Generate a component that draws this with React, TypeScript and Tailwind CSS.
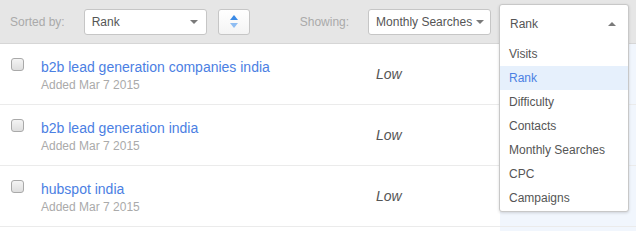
import React from 'react';

const keywords = [
  { title: 'b2b lead generation companies india', added: 'Added Mar 7 2015', difficulty: 'Low' },
  { title: 'b2b lead generation india', added: 'Added Mar 7 2015', difficulty: 'Low' },
  { title: 'hubspot india', added: 'Added Mar 7 2015', difficulty: 'Low' },
];

const sortOptions = ['Visits', 'Rank', 'Difficulty', 'Contacts', 'Monthly Searches', 'CPC', 'Campaigns'];

function CaretDown() {
  return (
    <svg width="8" height="4" viewBox="0 0 8 4" className="block">
      <path d="M0 0 L8 0 L4 4 Z" fill="#7a7a7a" />
    </svg>
  );
}

function CaretUp() {
  return (
    <svg width="8" height="4" viewBox="0 0 8 4" className="block">
      <path d="M0 4 L8 4 L4 0 Z" fill="#7a7a7a" />
    </svg>
  );
}

export default function App() {
  return (
    <div
      className="relative h-[231px] w-[636px] overflow-hidden bg-white"
      style={{ fontFamily: '"Liberation Sans", Arial, sans-serif' }}
    >
      {/* Toolbar */}
      <div className="flex h-[44px] items-center border-b border-[#d6d6d6] bg-[#e6e6e6]">
        <span className="ml-[10px] text-[12px] text-[#aaaaaa]">Sorted by:</span>
        <div className="ml-[19px] flex h-[26px] w-[123px] items-center justify-between rounded-[3px] border border-[#c6c6c6] bg-white pl-[7px] pr-[8px] text-[12px] text-[#555]">
          <span>Rank</span>
          <CaretDown />
        </div>
        <button className="ml-[11px] flex h-[26px] w-[32px] flex-col items-center justify-center gap-[3px] rounded-[3px] border border-[#c6c6c6] bg-gradient-to-b from-white to-[#f4f4f4]">
          <svg width="8" height="5" viewBox="0 0 8 5" className="block">
            <path d="M0 5 L8 5 L4 0 Z" fill="#3a8ae6" />
          </svg>
          <svg width="8" height="5" viewBox="0 0 8 5" className="block">
            <path d="M0 0 L8 0 L4 5 Z" fill="#8fbdf2" />
          </svg>
        </button>
        <span className="ml-[50px] text-[12px] text-[#aaaaaa]">Showing:</span>
        <div className="ml-[19px] flex h-[26px] items-center gap-[4px] rounded-[3px] border border-[#c6c6c6] bg-white pl-[7px] pr-[6px] text-[12px] text-[#555]">
          <span>Monthly Searches</span>
          <CaretDown />
        </div>
      </div>

      {/* Keyword rows */}
      {keywords.map((k) => (
        <div key={k.title} className="flex h-[61px] border-b border-[#ebebeb]">
          <div className="flex w-[500px]">
            <div className="ml-[11px] mt-[14px] h-[13px] w-[13px] rounded-[3px] border border-[#a9a9a9] bg-gradient-to-b from-[#f4f4f4] to-[#dedede]" />
            <div className="ml-[17px] flex-1 pt-[15px]">
              <div className="text-[14px] leading-4 text-[#4b80e3]">{k.title}</div>
              <div className="mt-[3px] text-[12px] leading-[14px] text-[#aaaaaa]">{k.added}</div>
            </div>
            <div className="flex w-[124px] items-center text-[14px] italic text-[#555]">{k.difficulty}</div>
          </div>
          <div className="flex-1 bg-[#f1f6fd]" />
        </div>
      ))}
      <div className="flex h-[10px]">
        <div className="w-[500px]" />
        <div className="flex-1 bg-[#f1f6fd]" />
      </div>

      {/* Open sort dropdown */}
      <div className="absolute left-[499px] top-[4px] w-[130px] rounded-[3px] border border-[#c8c8c8] bg-white pb-[1px] shadow-[0_1px_3px_rgba(0,0,0,0.15)]">
        <div className="flex h-[37px] items-center justify-between pl-[10px] pr-[12px] text-[12px] text-[#555]">
          <span>Rank</span>
          <CaretUp />
        </div>
        {sortOptions.map((opt) => (
          <div
            key={opt}
            className={`flex h-[24px] items-center pl-[9px] text-[12px] ${
              opt === 'Rank' ? 'bg-[#e6f0fc] text-[#4b80e3]' : 'text-[#555]'
            }`}
          >
            {opt}
          </div>
        ))}
      </div>
    </div>
  );
}
